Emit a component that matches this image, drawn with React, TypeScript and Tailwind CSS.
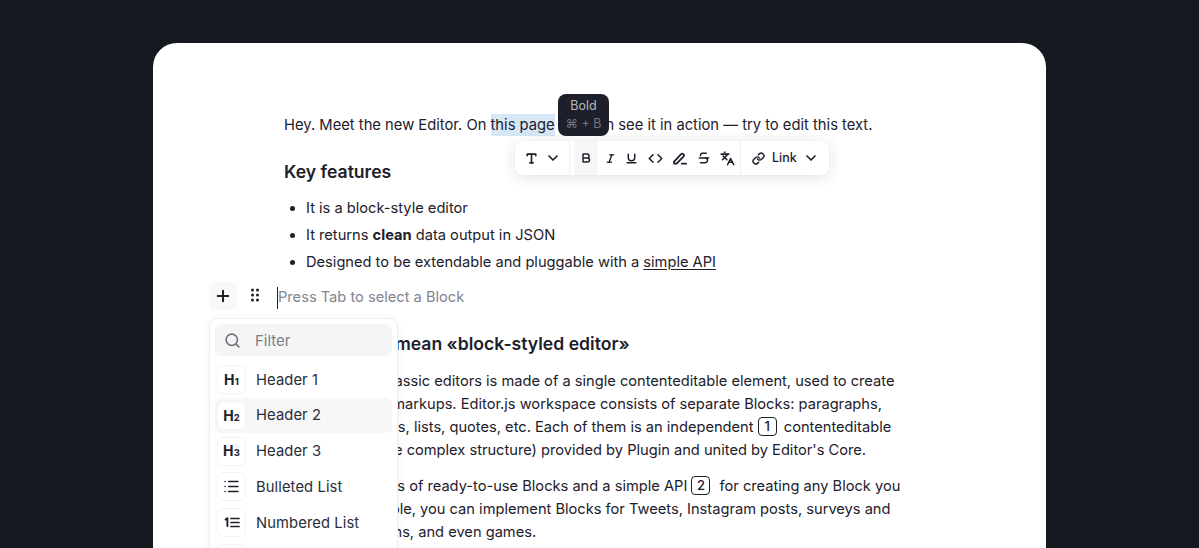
import { Bold, ChevronDown, Code, Italic, Languages, Link, List, Plus, Search, Strikethrough, Type, Underline } from "lucide-react"
import type { ReactNode } from "react"

function HeadingIcon({ n }: { n: number }) {
  return (
    <span className="flex items-baseline text-[14px] font-bold leading-none text-[#1d202b]">
      H<span className="text-[9.5px]">{n}</span>
    </span>
  )
}

function MarkerIcon() {
  return (
    <svg viewBox="0 0 16 16" className="size-[15px]" fill="none" stroke="currentColor" strokeWidth="1.9" strokeLinecap="round" strokeLinejoin="round">
      <path d="M2 11.5 9.5 3.5a1.8 1.8 0 0 1 2.7 2.4L5 13.5H2.2z" />
      <path d="M10.5 13.5H15" />
    </svg>
  )
}

function NumberedIcon() {
  return (
    <svg viewBox="0 0 16 16" className="size-[16px]" fill="none" stroke="currentColor" strokeWidth="1.7" strokeLinecap="round" strokeLinejoin="round">
      <path d="M1.6 4.6 3.4 3.2V11" strokeWidth="1.9" />
      <path d="M7 3.5H15M7 7.5H15M7 11.5H15" />
    </svg>
  )
}

function DragIcon() {
  return (
    <svg viewBox="0 0 12 16" className="h-[16px] w-[12px]" fill="currentColor">
      <circle cx="3.5" cy="3" r="1.5" />
      <circle cx="8.5" cy="3" r="1.5" />
      <circle cx="3.5" cy="8" r="1.5" />
      <circle cx="8.5" cy="8" r="1.5" />
      <circle cx="3.5" cy="13" r="1.5" />
      <circle cx="8.5" cy="13" r="1.5" />
    </svg>
  )
}

const BLOCKS: { label: string; icon: ReactNode; active?: boolean }[] = [
  { label: "Header 1", icon: <HeadingIcon n={1} /> },
  { label: "Header 2", icon: <HeadingIcon n={2} />, active: true },
  { label: "Header 3", icon: <HeadingIcon n={3} /> },
  { label: "Bulleted List", icon: <List className="size-[17px]" strokeWidth={2.25} /> },
  { label: "Numbered List", icon: <NumberedIcon /> },
  { label: "Checklist", icon: <List className="size-[17px]" strokeWidth={2.25} /> },
]

function Num({ n, className }: { n: number; className: string }) {
  return (
    <span className={`inline-flex h-[19px] w-[19px] translate-y-[-1px] items-center justify-center rounded-[4px] border border-[#1d202b] text-[13px] font-medium leading-none ${className}`}>
      {n}
    </span>
  )
}

function Toolbar() {
  return (
    <div className="absolute left-[362px] top-[98px] flex h-[34px] w-[314px] items-center rounded-lg bg-white text-[#1d202b] shadow-[0_2px_14px_rgba(29,32,43,0.14)]">
      <div className="flex h-full w-[55px] items-center gap-[7px] border-r border-[#f0f0f1] pl-[10px]">
        <Type className="size-[13px]" strokeWidth={3} />
        <ChevronDown className="size-[16px]" strokeWidth={2.5} />
      </div>
      <div className="ml-[4px] flex h-full w-[24px] items-center justify-center bg-[#f6f6f7]">
        <Bold className="size-[12px]" strokeWidth={3} />
      </div>
      <div className="flex h-full w-[143px] items-center gap-[9.5px] border-r border-[#f0f0f1] pl-[6.5px]">
        <Italic className="size-[11px]" strokeWidth={3} />
        <Underline className="size-[13px]" strokeWidth={2.75} />
        <Code className="size-[15px]" strokeWidth={2.5} />
        <MarkerIcon />
        <Strikethrough className="size-[14px]" strokeWidth={2.5} />
        <Languages className="size-[15px]" strokeWidth={2.5} />
      </div>
      <div className="flex items-center pl-[11px] text-[12.5px] font-medium">
        <Link className="size-[13px]" strokeWidth={2.75} />
        <span className="ml-[7px]">Link</span>
        <ChevronDown className="ml-[6px] size-[16px]" strokeWidth={2.5} />
      </div>
    </div>
  )
}

function BlockMenu() {
  return (
    <div className="absolute left-[56px] top-[275px] w-[189px] rounded-lg border border-[#eeeef0] bg-white p-[5px] pb-0 shadow-[0_3px_12px_rgba(29,32,43,0.05)]">
      <div className="flex h-[32px] items-center rounded-md bg-[#f5f5f6] pl-[9px] text-[15px] text-[#7a7e88]">
        <Search className="size-[17px] text-[#6b6f7a]" strokeWidth={2.25} />
        <span className="ml-[14px] translate-y-[1px]">Filter</span>
      </div>
      <div className="mt-[6px] flex flex-col">
        {BLOCKS.map((b) => (
          <div
            key={b.label}
            className={`flex h-[35.7px] items-center rounded-md pl-[2px] text-[14.75px] tracking-[0.1px] text-[#2a2d38] ${
              b.active ? "bg-[#f7f7f8]" : ""
            }`}
          >
            <span className="flex h-[29px] w-[29px] items-center justify-center rounded-md border border-[#f3f3f4] bg-white text-[#1d202b]">
              {b.icon}
            </span>
            <span className="ml-[10px]">{b.label}</span>
          </div>
        ))}
      </div>
    </div>
  )
}

export default function App() {
  return (
    <div className="flex h-[548px] justify-center overflow-hidden bg-[#161820] pt-[43px] font-[family-name:Inter,sans-serif] text-[14.65px] text-[#1d202b]">
      <div className="relative h-[600px] w-[893px] rounded-[24px] bg-white pl-[131px] pt-[71px]">
        <p className="h-[23px] whitespace-nowrap text-[14.75px] leading-[23px]">
          Hey. Meet the new Editor. On <span className="bg-[#d6e7f8] py-[2px]">this page</span> you can see it in action — try to edit this text.
        </p>

        <h2 className="mt-[23px] text-[17.6px] font-semibold leading-[23px]">Key features</h2>

        <ul className="mt-[12px] list-disc pl-[22px] leading-[27px]">
          <li>It is a block-style editor</li>
          <li>It returns <b className="font-bold">clean</b> data output in JSON</li>
          <li>Designed to be extendable and pluggable with a <span className="underline underline-offset-2">simple API</span></li>
        </ul>

        <div className="-ml-[75px] mt-[6px] flex h-[28px] items-center">
          <span className="flex size-[28px] items-center justify-center rounded-md bg-[#f8f8f8]">
            <Plus className="size-[18px]" strokeWidth={2.75} />
          </span>
          <span className="ml-[12px] -mt-[2px]">
            <DragIcon />
          </span>
          <span className="ml-[16px] mt-[4px] h-[22px] w-px bg-[#1d202b]" />
          <span className="mt-[4px] text-[#82858e]">Press Tab to select a Block</span>
        </div>

        <h2 className="mt-[22px] whitespace-nowrap text-[17.6px] font-semibold leading-[23px]">
          What does it mean «block-styled editor»
        </h2>

        <div className="mt-[15px] whitespace-nowrap leading-[23px]">
          <p>Workspace in classic editors is made of a single contenteditable element, used to create</p>
          <p>different HTML markups. Editor.js workspace consists of separate Blocks: paragraphs,</p>
          <p>headings, images, lists, quotes, etc. Each of them is an independent <Num n={1} className="mr-[3px]" /> contenteditable</p>
          <p>element (or more complex structure) provided by Plugin and united by Editor's Core.</p>
        </div>

        <div className="mt-[13px] whitespace-nowrap leading-[23px]">
          <p>There are dozens of ready-to-use Blocks and a simple API <Num n={2} className="mr-[5px]" /> for creating any Block you</p>
          <p>need. For example, you can implement Blocks for Tweets, Instagram posts, surveys and</p>
          <p>polls, CTA buttons, and even games.</p>
        </div>

        <div className="absolute left-[405px] top-[51px] flex h-[42px] w-[51px] flex-col items-center justify-center rounded-lg bg-[#1d202b] text-[12.5px] leading-[18px]">
          <span className="text-[#b4b7bf]">Bold</span>
          <span className="text-[#70747f]">⌘ + B</span>
        </div>
        <Toolbar />
        <BlockMenu />
      </div>
    </div>
  )
}
